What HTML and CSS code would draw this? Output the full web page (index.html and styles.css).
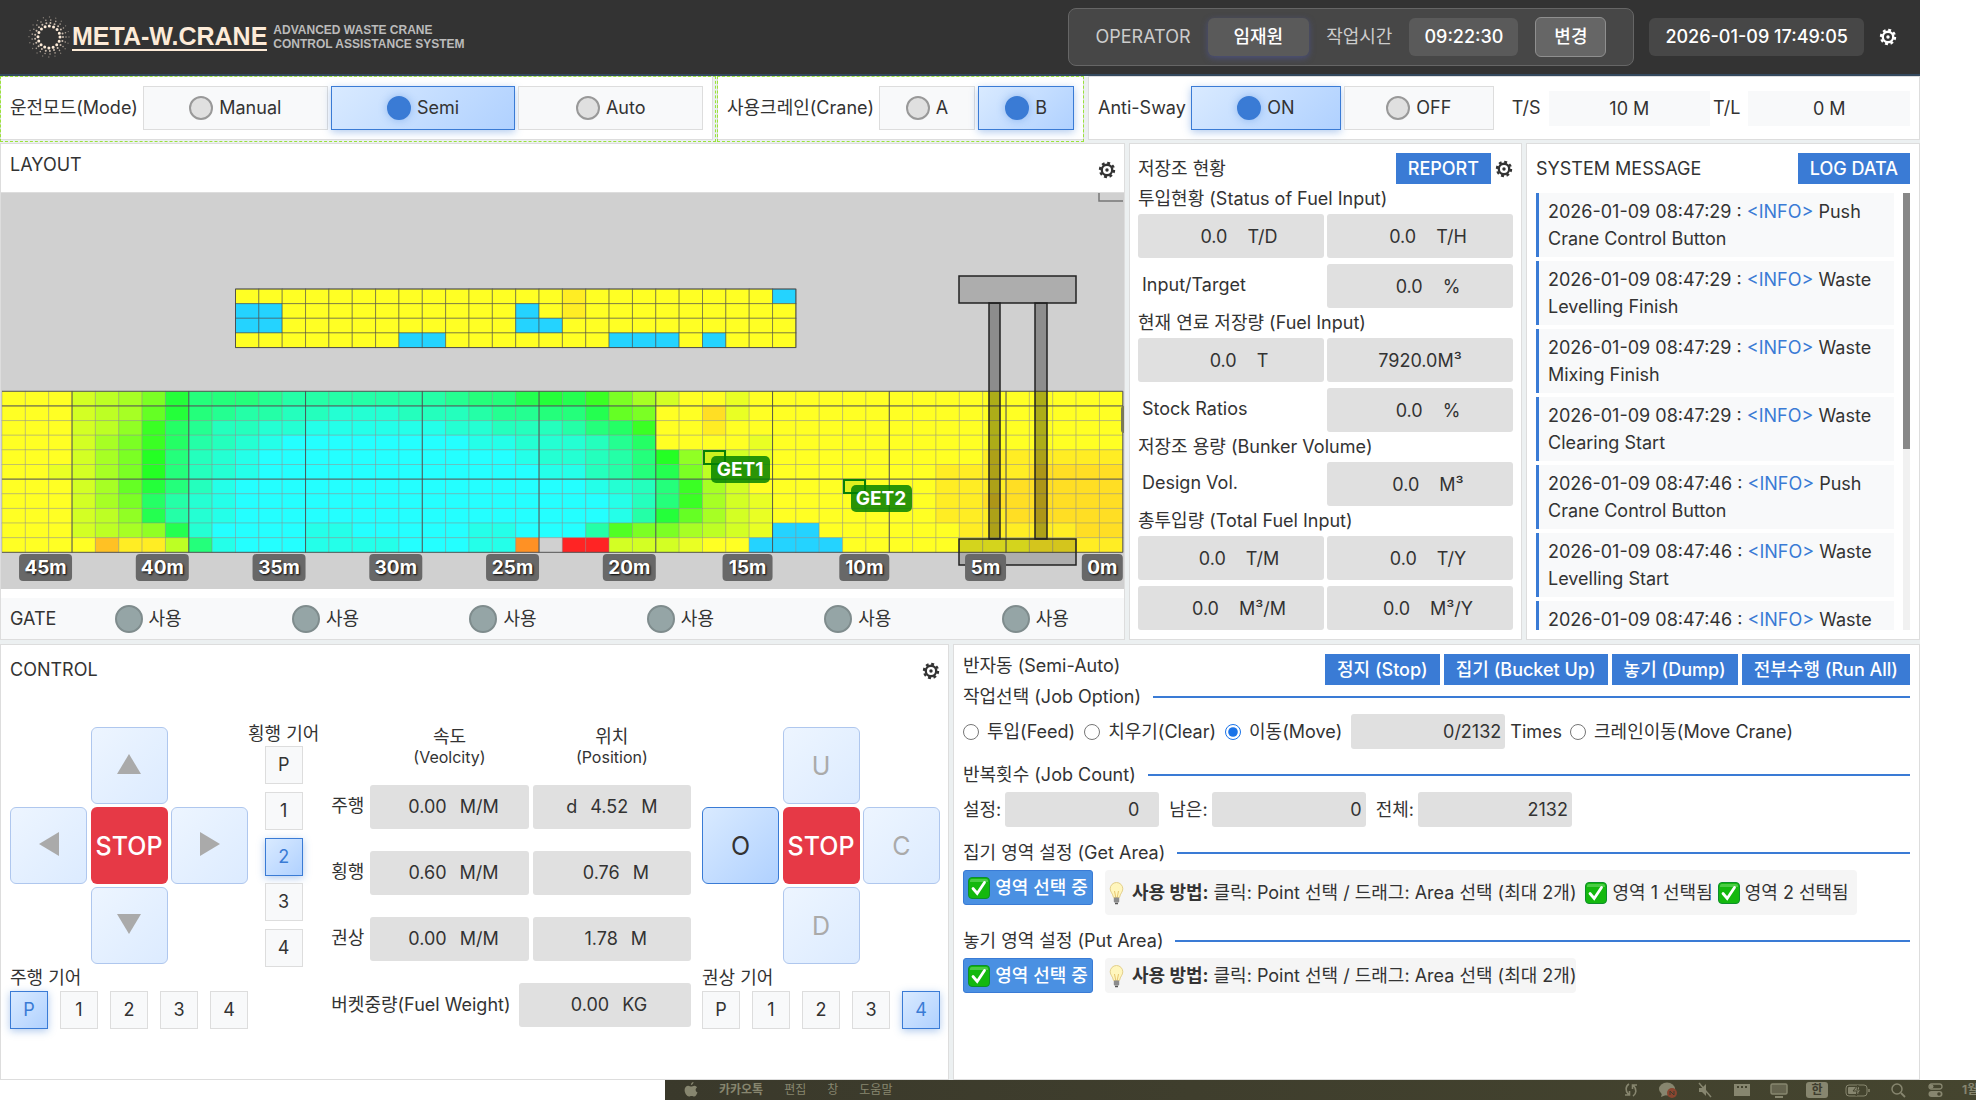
FILE: index.html
```html
<!DOCTYPE html>
<html lang="ko">
<head>
<meta charset="utf-8">
<title>META-W.CRANE</title>
<link rel="stylesheet" href="styles.css">
</head>
<body>
<svg class="defs" aria-hidden="true">
  <symbol id="gear" viewBox="0 0 20 20">
    <circle cx="10" cy="10" r="7.800" fill="none" stroke="currentColor" stroke-width="2.600" stroke-dasharray="3.2 2.926"/>
    <circle cx="10" cy="10" r="5.800" fill="none" stroke="currentColor" stroke-width="2.600"/>
    <circle cx="10" cy="10" r="1.900" fill="currentColor"/>
  </symbol>
  <symbol id="check" viewBox="0 0 22 22">
    <rect x=".5" y=".5" width="21" height="21" rx="3.5" fill="#14b80e" stroke="#0d8f2b"/>
    <path d="M2 3.5Q2 2 3.5 2h15Q20 2 20 3.5V5H2z" fill="#6fd96a" opacity=".6"/>
    <path d="M5 11.5l4.2 5L16.500 5.500" fill="none" stroke="#fff" stroke-width="2.800" stroke-linecap="round"/>
  </symbol>
  <symbol id="bulb" viewBox="0 0 16 24">
    <path d="M8 1.500a6.300 6.300 0 0 0-6.300 6.300c0 3.200 2.600 4.600 3.300 8.700h6c.7-4.100 3.300-5.500 3.300-8.700A6.300 6.300 0 0 0 8 1.500z" fill="#fff6bd" stroke="#e3cf8a"/>
    <path d="M6 10l1.200 6M10 10l-1.200 6" stroke="#e0b95a" stroke-width=".8"/>
    <rect x="5.300" y="16.500" width="5.400" height="5" rx="1" fill="#8c8c8c"/>
    <path d="M6.500 22.500h3" stroke="#555" stroke-width="1.500"/>
  </symbol>
</svg>

<div class="app">
  <header class="topbar">
    <div class="brand">
      <svg class="brand-mark" viewBox="0 0 44 44" fill="none" stroke="#fdebd8" stroke-linecap="round">
        <circle cx="22" cy="22" r="11" stroke-width="3" stroke-dasharray="0 4.320"/>
        <circle cx="22" cy="22" r="14" stroke-width="2" stroke-dasharray="0 4.190" opacity=".75"/>
        <circle cx="22" cy="22" r="17" stroke-width="1.600" stroke-dasharray="0 5.090" opacity=".6"/>
        <circle cx="22" cy="22" r="20" stroke-width="1.400" stroke-dasharray="0 6.280" opacity=".4"/>
      </svg>
      <span class="brand-name">META-W.CRANE</span>
      <span class="brand-sub">ADVANCED WASTE CRANE<br>CONTROL ASSISTANCE SYSTEM</span>
    </div>
    <div class="operator">
      <span class="operator-label">OPERATOR</span>
      <span class="chip chip-name">임재원</span>
      <span class="operator-label">작업시간</span>
      <span class="chip">09:22:30</span>
      <button class="change" type="button">변경</button>
    </div>
    <time class="chip clock">2026-01-09 17:49:05</time>
    <button class="icon-btn light" type="button" aria-label="설정"><svg><use href="#gear"/></svg></button>
  </header>

  <div class="row modes">
    <section class="panel bar guided">
      <span>운전모드(Mode)</span>
      <label class="toggle"><input type="radio" name="mode">Manual</label>
      <label class="toggle"><input type="radio" name="mode" checked>Semi</label>
      <label class="toggle"><input type="radio" name="mode">Auto</label>
    </section>
    <section class="panel bar guided crane-bar">
      <span>사용크레인(Crane)</span>
      <label class="toggle"><input type="radio" name="crane">A</label>
      <label class="toggle"><input type="radio" name="crane" checked>B</label>
    </section>
    <section class="panel bar sway">
      <span>Anti-Sway</span>
      <label class="toggle"><input type="radio" name="sway" checked>ON</label>
      <label class="toggle"><input type="radio" name="sway">OFF</label>
      <span class="sway-key">T/S</span><span class="sway-val">10 M</span>
      <span>T/L</span><span class="sway-val">0 M</span>
    </section>
  </div>

  <div class="row middle">
    <section class="panel layout">
      <div class="layout-head">
        <h2>LAYOUT</h2>
        <button class="icon-btn" type="button" aria-label="설정"><svg><use href="#gear"/></svg></button>
      </div>
      <svg class="map" id="map" viewBox="0 0 1123 396">
        <g id="cells"></g>
        <path d="M1098 0v8h24" fill="none" stroke="#777" stroke-width="1.500"/>
        <g fill="#000" fill-opacity=".17" stroke="#222" stroke-width="1.500">
          <rect x="958" y="83" width="117" height="27"/>
          <rect x="958" y="346" width="117" height="26"/>
          <rect x="988" y="110" width="11" height="236" fill-opacity=".32"/>
          <rect x="1034" y="110" width="12" height="236" fill-opacity=".32"/>
        </g>
        <rect x="1120" y="213" width="8" height="27" rx="3" fill="#7a7a58"/>
        <g class="axis" id="axis"></g>
        <g fill="#008000" fill-opacity=".12" stroke="#087f08" stroke-width="2">
          <rect x="703" y="258" width="21" height="13"/>
          <rect x="843" y="287" width="21" height="13"/>
        </g>
        <g class="pick">
          <rect x="710" y="263" width="59" height="27" rx="5"/><text x="739" y="283">GET1</text>
          <rect x="850" y="292" width="61" height="27" rx="5"/><text x="880" y="312">GET2</text>
        </g>
      </svg>
      <div class="gates">
        <span>GATE</span>
        <ul>
          <li>사용</li><li>사용</li><li>사용</li><li>사용</li><li>사용</li><li>사용</li>
        </ul>
      </div>
    </section>

    <section class="panel storage">
      <div class="head">
        <h2>저장조 현황</h2>
        <button class="action" type="button">REPORT</button>
        <button class="icon-btn" type="button" aria-label="설정"><svg><use href="#gear"/></svg></button>
      </div>
      <h3>투입현황 (Status of Fuel Input)</h3>
      <div class="pairs">
        <div class="value"><span>0.0</span><span>T/D</span></div>
        <div class="value"><span>0.0</span><span>T/H</span></div>
        <span class="key">Input/Target</span>
        <div class="value"><span>0.0</span><span>%</span></div>
      </div>
      <h3>현재 연료 저장량 (Fuel Input)</h3>
      <div class="pairs">
        <div class="value"><span>0.0</span><span>T</span></div>
        <div class="value plain">7920.0M³</div>
        <span class="key">Stock Ratios</span>
        <div class="value"><span>0.0</span><span>%</span></div>
      </div>
      <h3>저장조 용량 (Bunker Volume)</h3>
      <div class="pairs">
        <span class="key">Design Vol.</span>
        <div class="value"><span>0.0</span><span>M³</span></div>
      </div>
      <h3>총투입량 (Total Fuel Input)</h3>
      <div class="pairs">
        <div class="value"><span>0.0</span><span>T/M</span></div>
        <div class="value"><span>0.0</span><span>T/Y</span></div>
        <div class="value"><span>0.0</span><span>M³/M</span></div>
        <div class="value"><span>0.0</span><span>M³/Y</span></div>
      </div>
    </section>

    <section class="panel messages">
      <div class="head">
        <h2>SYSTEM MESSAGE</h2>
        <button class="action" type="button">LOG DATA</button>
      </div>
      <div class="log">
        <ul>
          <li>2026-01-09 08:47:29 : <b>&lt;INFO&gt;</b> Push Crane Control Button</li>
          <li>2026-01-09 08:47:29 : <b>&lt;INFO&gt;</b> Waste Levelling Finish</li>
          <li>2026-01-09 08:47:29 : <b>&lt;INFO&gt;</b> Waste Mixing Finish</li>
          <li>2026-01-09 08:47:29 : <b>&lt;INFO&gt;</b> Waste Clearing Start</li>
          <li>2026-01-09 08:47:46 : <b>&lt;INFO&gt;</b> Push Crane Control Button</li>
          <li>2026-01-09 08:47:46 : <b>&lt;INFO&gt;</b> Waste Levelling Start</li>
          <li>2026-01-09 08:47:46 : <b>&lt;INFO&gt;</b> Waste</li>
        </ul>
        <div class="track"><div class="thumb"></div></div>
      </div>
    </section>
  </div>

  <div class="row bottom">
    <section class="panel control">
      <div class="control-head">
        <h2>CONTROL</h2>
        <button class="icon-btn" type="button" aria-label="설정"><svg><use href="#gear"/></svg></button>
      </div>
      <div class="control-body">
        <div class="pad-col">
          <div class="pad">
            <button class="up" type="button" aria-label="앞"><svg viewBox="0 0 24 24"><path d="M12 2l12 20H0z"/></svg></button>
            <button class="left" type="button" aria-label="왼쪽"><svg viewBox="0 0 24 24"><path d="M2 12L22 0v24z"/></svg></button>
            <button class="stop" type="button">STOP</button>
            <button class="right" type="button" aria-label="오른쪽"><svg viewBox="0 0 24 24"><path d="M22 12L2 0v24z"/></svg></button>
            <button class="down" type="button" aria-label="뒤"><svg viewBox="0 0 24 24"><path d="M12 22L0 2h24z"/></svg></button>
          </div>
          <span class="gear-title">주행 기어</span>
          <div class="gears">
            <button class="on" type="button">P</button><button type="button">1</button><button type="button">2</button><button type="button">3</button><button type="button">4</button>
          </div>
        </div>
        <div class="side-gear">
          <span>횡행 기어</span>
          <div class="gears vertical">
            <button type="button">P</button><button type="button">1</button><button class="on" type="button">2</button><button type="button">3</button><button type="button">4</button>
          </div>
        </div>
        <div class="readouts">
          <table>
            <thead>
              <tr><td></td><th>속도<small>(Veolcity)</small></th><th>위치<small>(Position)</small></th></tr>
            </thead>
            <tbody>
              <tr><th>주행</th><td><div class="value"><span>0.00</span><span>M/M</span></div></td><td><div class="value plain"><span>d</span><span>4.52</span><span>M</span></div></td></tr>
              <tr><th>횡행</th><td><div class="value"><span>0.60</span><span>M/M</span></div></td><td><div class="value"><span>0.76</span><span>M</span></div></td></tr>
              <tr><th>권상</th><td><div class="value"><span>0.00</span><span>M/M</span></div></td><td><div class="value"><span>1.78</span><span>M</span></div></td></tr>
            </tbody>
          </table>
          <div class="weight">
            <span>버켓중량(Fuel Weight)</span>
            <div class="value"><span>0.00</span><span>KG</span></div>
          </div>
        </div>
        <div class="pad-col">
          <div class="pad">
            <button class="up" type="button">U</button>
            <button class="left on" type="button">O</button>
            <button class="stop" type="button">STOP</button>
            <button class="right" type="button">C</button>
            <button class="down" type="button">D</button>
          </div>
          <span class="gear-title">권상 기어</span>
          <div class="gears">
            <button type="button">P</button><button type="button">1</button><button type="button">2</button><button type="button">3</button><button class="on" type="button">4</button>
          </div>
        </div>
      </div>
    </section>

    <section class="panel auto">
      <div class="head">
        <h2>반자동 (Semi-Auto)</h2>
        <button class="action" type="button">정지 (Stop)</button>
        <button class="action" type="button">집기 (Bucket Up)</button>
        <button class="action" type="button">놓기 (Dump)</button>
        <button class="action" type="button">전부수행 (Run All)</button>
      </div>
      <h3>작업선택 (Job Option)</h3>
      <div class="line">
        <label class="pick-job"><input type="radio" name="job">투입(Feed)</label>
        <label class="pick-job"><input type="radio" name="job">치우기(Clear)</label>
        <label class="pick-job"><input type="radio" name="job" checked>이동(Move)</label>
        <label class="times"><input class="num" type="text" value="0/2132">Times</label>
        <label class="pick-job"><input type="radio" name="job">크레인이동(Move Crane)</label>
      </div>
      <h3>반복횟수 (Job Count)</h3>
      <div class="line counts">
        <label>설정:<input class="num spin" type="text" value="0"></label>
        <label>남은:<input class="num" type="text" value="0"></label>
        <label>전체:<input class="num" type="text" value="2132"></label>
      </div>
      <h3>집기 영역 설정 (Get Area)</h3>
      <div class="line area">
        <button class="select" type="button"><svg><use href="#check"/></svg>영역 선택 중</button>
        <p class="hint tall"><svg class="bulb"><use href="#bulb"/></svg><strong>사용 방법:</strong> 클릭: Point 선택 / 드래그: Area 선택 (최대 2개)
          <span class="done first"><svg><use href="#check"/></svg>영역 1 선택됨</span><span class="done"><svg><use href="#check"/></svg>영역 2 선택됨</span></p>
      </div>
      <h3>놓기 영역 설정 (Put Area)</h3>
      <div class="line area">
        <button class="select" type="button"><svg><use href="#check"/></svg>영역 선택 중</button>
        <p class="hint"><svg class="bulb"><use href="#bulb"/></svg><strong>사용 방법:</strong> 클릭: Point 선택 / 드래그: Area 선택 (최대 2개)</p>
      </div>
    </section>
  </div>
</div>

<footer class="menubar">
  <nav>
    <svg viewBox="0 0 14 16" width="14" height="16"><path fill="currentColor" d="M9.500 0c.1 1.500-1.100 3-2.600 3.100C6.800 1.700 8 .2 9.500 0zM13 5.500c-2 1.200-1.700 4 .5 4.900-.6 1.700-1.900 4.100-3.300 4.100-1 0-1.400-.6-2.600-.6s-1.700.6-2.600.6C3 14.500.6 11.200.6 8 .6 5.300 2.300 3.700 4.200 3.700c1.200 0 2.200.8 3 .8s2-.9 3.400-.8c1 .1 1.900.6 2.400 1.800z"/></svg>
    <b>카카오톡</b><span>편집</span><span>창</span><span>도움말</span>
  </nav>
  <div class="status">
    <svg viewBox="0 0 20 16"><path d="M8 2C4.500 4 4 9 7.500 12.500M12 14c3.500-2 4-7 .5-10.500M4 13h4.500V9M16 3h-4.500v4" fill="none" stroke="currentColor" stroke-width="1.600"/></svg>
    <svg viewBox="0 0 20 16"><ellipse cx="9" cy="7" rx="8" ry="6.500" fill="currentColor"/><path d="M4 11l-1 4 5-2z" fill="currentColor"/><circle cx="14" cy="11" r="5" fill="#8a4630"/><path d="M12 13V9l4 4V9" fill="none" stroke="#3d3c2e"/></svg>
    <svg viewBox="0 0 20 16"><path d="M4 6h3l4-4v12l-4-4H4z" fill="currentColor"/><path d="M4 1l12 14" stroke="currentColor" stroke-width="1.500"/></svg>
    <svg viewBox="0 0 20 16"><path fill="currentColor" fill-rule="evenodd" d="M2 2h16v12H2zM5 4v2h2V4zM9 4v2h2V4zM13 4v2h2V4z"/></svg>
    <svg viewBox="0 0 20 16"><rect x="2" y="2" width="16" height="10" rx="1.500" fill="currentColor" fill-opacity=".5" stroke="currentColor" stroke-width="1.500"/><path d="M6 15h8" stroke="currentColor" stroke-width="2"/></svg>
    <span class="ime">한</span>
    <svg class="battery" viewBox="0 0 26 16"><rect x="1" y="3" width="21" height="11" rx="3" fill="none" stroke="currentColor"/><rect x="3" y="5" width="11" height="7" rx="1" fill="currentColor"/><path d="M13 3l-5 6h4l-1 5 5-6h-4z" fill="currentColor" stroke="#45442f"/><path d="M24 7v3" stroke="currentColor" stroke-width="1.500"/></svg>
    <svg viewBox="0 0 20 16"><circle cx="9" cy="7" r="5" fill="none" stroke="currentColor" stroke-width="1.500"/><path d="M13 11l4 4" stroke="currentColor" stroke-width="1.800"/></svg>
    <svg viewBox="0 0 20 16"><rect x="4" y="2" width="13" height="5" rx="2.500" fill="none" stroke="currentColor" stroke-width="1.300"/><rect x="3.500" y="9" width="14" height="6" rx="3" fill="currentColor"/><circle cx="6.500" cy="4.500" r="2" fill="currentColor"/><circle cx="14" cy="12" r="1.800" fill="#45442f"/></svg>
    <span class="date">1월</span>
  </div>
</footer>
<script src="map.js"></script>
</body>
</html>
```
FILE: styles.css
```css
* { box-sizing: border-box; }
body {
  margin: 0;
  background: #fff;
  color: #333;
  font: 18px/24px Inter, "Noto Sans CJK KR", sans-serif;
}
button, input { font: inherit; color: inherit; }
button { padding: 0; border: 0; background: none; white-space: nowrap; }
h2, h3, p, ul { margin: 0; padding: 0; font-size: 18px; font-weight: 400; }
ul { list-style: none; }
.defs { position: absolute; width: 0; height: 0; }

.app { margin-right: 56px; background: #ecf0f1; }
.panel { background: #fff; border: 1px solid #ddd; }
.row { display: grid; gap: 4px; margin-bottom: 4px; }
.icon-btn { width: 18px; height: 18px; }
.icon-btn svg { display: block; width: 18px; height: 18px; }
.light { color: #fff; }

/* header */
.topbar {
  display: flex;
  align-items: center;
  height: 76px;
  padding: 0 23px 0 27px;
  background: #333;
  border-bottom: 2px solid #34495e;
  color: #fff;
}
.brand { display: flex; align-items: center; margin-right: auto; font-family: "Liberation Sans", sans-serif; font-weight: 700; }
.brand-mark { width: 44px; height: 44px; }
.brand-name { margin: 0 6px 0 1px; border-bottom: 2px solid #fdebd8; color: #fdebd8; font-size: 25px; line-height: 26px; }
.brand-sub { color: #bbb; font-size: 12px; line-height: 14px; }
.operator {
  display: flex;
  align-items: center;
  height: 58px;
  margin-right: 15px;
  padding: 0 27px;
  border: 1px solid #666;
  border-radius: 8px;
  background: #474747;
}
.operator-label { margin-right: 17px; color: #ccc; }
.chip { height: 38px; margin-right: 17px; padding: 0 15px; border-radius: 6px; background: #5a5a5a; line-height: 38px; font-weight: 500; }
.chip-name { padding: 0 26px; box-shadow: 0 2px 6px rgba(80, 90, 180, .5); }
.clock { margin-right: 15px; padding: 0 16px; background: #474747; }
.change { width: 71px; height: 40px; border: 1px solid #8f8f8f; border-radius: 6px; background: #666; font-weight: 500; }

/* mode bar */
.modes { grid-template-columns: minmax(0, 713fr) minmax(0, 367fr) minmax(0, 832fr); margin-bottom: 3px; }
.bar { display: flex; align-items: center; gap: 3px; height: 64px; padding: 0 9px; white-space: nowrap; }
.guided { position: relative; }
.guided::after { content: ""; position: absolute; inset: -1px -4px -3px -1px; border: 1px dashed #9be33a; pointer-events: none; }
.crane-bar::after { right: -1px; }
.toggle {
  display: flex;
  flex: 1;
  align-items: center;
  justify-content: center;
  gap: 6px;
  height: 44px;
  border: 1px solid #ddd;
  background: #f8f9fa;
}
.bar > span:first-child { margin-right: 2px; }
.toggle input { appearance: none; width: 24px; height: 24px; margin: 0; border: 2px solid #999; border-radius: 50%; background: #e0e0e0; }
.toggle:has(:checked), .gears .on {
  border-color: #3a7bd5;
  background: linear-gradient(135deg, #d9eaff, #b0d1ff);
  box-shadow: 0 2px 8px rgba(58, 123, 213, .4);
}
.toggle input:checked { border-color: #3a7bd5; background: #3a7bd5; box-shadow: 0 0 8px rgba(58, 123, 213, .4); }
.sway .toggle { flex: 0 1 150px; }
.sway-key { margin-left: 15px; }
.sway-val { flex: 1; height: 35px; margin-left: 5px; background: #f8f9fa; line-height: 35px; text-align: center; }

/* middle row */
.middle { grid-template-columns: minmax(0, 1125fr) minmax(0, 393fr) minmax(0, 394fr); }
.head { display: flex; align-items: center; gap: 4px; height: 31px; }
.head h2 { margin-right: auto; }
.action { height: 31px; padding: 0 12px; background: #3a7bd5; color: #fff; font-weight: 500; }
.value { display: flex; align-items: center; justify-content: center; height: 44px; border-radius: 3px; background: #e0e0e0; }

.layout { display: flex; flex-direction: column; }
.layout-head { display: flex; justify-content: space-between; padding: 9px 8px 13px 9px; }
.layout-head .icon-btn { margin-top: 8px; }
.map { display: block; width: 100%; border-top: 1px solid #ddd; background: #d0d0d0; }
.cell-a { stroke: #888; stroke-opacity: .35; }
.cell-b { stroke: #444; stroke-opacity: .5; }
.axis rect { fill: #686868; }
.axis text, .pick text { fill: #fff; font-size: 19px; font-weight: 700; text-anchor: middle; }
.axis text { text-shadow: 1px 1px 2px #000; }
.pick rect { fill: #008000; fill-opacity: .83; }
.gates { display: flex; align-items: center; height: 41px; margin-top: auto; padding-left: 9px; background: #f8f9fa; }
.gates ul { display: flex; flex: 1; margin-left: 3px; }
.gates li { display: flex; flex: 1; align-items: center; justify-content: center; gap: 6px; }
.gates li::before { content: ""; width: 24px; height: 24px; border: 2px solid #7f8c8d; border-radius: 50%; background: #95a5a6; }

.storage { padding: 9px 8px; }
.storage h3 { height: 30px; line-height: 29px; }
.storage .value { padding-top: 1px; }
.pairs { display: grid; grid-template-columns: 1fr 1fr; gap: 6px 3px; }
.pairs .value { gap: 20px; padding-left: 16px; }
.pairs .plain { padding-left: 0; }
.key { padding-left: 4px; line-height: 42px; }

.messages { padding: 9px; }
.log { display: flex; justify-content: space-between; height: 437px; margin-top: 9px; overflow: hidden; }
.log ul { width: 358px; }
.log li { margin-bottom: 4px; padding: 5px 9px; border-left: 3px solid #3a7bd5; background: #f8f9fa; line-height: 27px; }
.log b { color: #3a7bd5; font-weight: 400; }
.track { width: 7px; background: #f1f1f1; }
.thumb { height: 256px; background: #888; }

/* bottom row */
.bottom { grid-template-columns: minmax(0, 949fr) minmax(0, 967fr); margin: 0; }
.control { padding: 0 8px 0 9px; }
.control-head { display: flex; justify-content: space-between; padding-top: 13px; }
.control-head .icon-btn { margin-top: 4px; }
.control-body { display: flex; margin-top: 45px; }
.pad-col { width: 238px; }
.pad { display: grid; grid-template: repeat(3, 77px) / repeat(3, 77px); gap: 3px; justify-content: space-between; }
.pad button { border: 1px solid #afc7ee; border-radius: 6px; background: linear-gradient(135deg, #edf5ff, #dcebff); color: #aaa; font-size: 25px; }
.pad svg { width: 24px; height: 24px; fill: #aaa; }
.pad .up { grid-area: 1 / 2; }
.pad .left { grid-area: 2 / 1; }
.pad .stop { grid-area: 2 / 2; border: 0; background: #e63946; color: #fff; font-weight: 500; }
.pad .right { grid-area: 2 / 3; }
.pad .down { grid-area: 3 / 2; }
.pad .on { border-color: #3a7bd5; background: linear-gradient(135deg, #d9eaff, #b0d1ff); color: #333; }
.gear-title { display: block; line-height: 27px; }
.gears { display: flex; justify-content: space-between; }
.gears button { width: 38px; height: 38px; border: 1px solid #ddd; background: #f8f9fa; }
.gears .on { color: #3a7bd5; }
.side-gear { display: flex; flex-direction: column; align-items: center; margin-top: -5px; }
.vertical { flex-direction: column; height: 221px; }
.readouts { flex: 1; margin: 0 11px 0 12px; }
table { width: 100%; border-spacing: 0; table-layout: fixed; }
td, th { height: 66px; padding: 0 0 0 4px; font-weight: 400; text-align: center; vertical-align: top; }
tbody th { padding: 0; line-height: 42px; text-align: left; }
thead td, thead th { height: 58px; line-height: 20px; }
thead td { width: 35px; }
small { display: block; font-size: 16px; }
.readouts .value { gap: 13px; padding-left: 8px; }
.readouts .plain { padding: 0; }
.weight { display: flex; align-items: center; justify-content: space-between; }
.weight .value { width: 172px; }

.auto { min-height: 436px; padding: 9px; white-space: nowrap; }
.auto .head h2 { line-height: 20px; margin-bottom: 8px; }
.auto h3 { display: flex; align-items: center; gap: 12px; height: 24px; margin-bottom: 5px; }
.auto h3::after { content: ""; flex: 1; height: 2px; background: #3a7bd5; }
.line { display: flex; align-items: center; margin-bottom: 14px; }
.line label { display: flex; align-items: center; }
.pick-job { margin-right: 9px; }
.pick-job input { width: 16px; height: 16px; margin: 0 8px 0 0; accent-color: #1a73e8; }
.num { width: 154px; height: 35px; padding: 0 4px; border: 0; border-radius: 3px; background: #e0e0e0; text-align: right; }
.times { margin-right: 8px; }
.times input { margin-right: 5px; }
.spin { padding-right: 20px; }
.counts label { margin-right: 10px; }
.counts input { margin-left: 4px; }
.area { align-items: flex-start; gap: 12px; }
.select { display: flex; align-items: center; justify-content: center; gap: 5px; width: 130px; height: 35px; border: 1px solid #3a7bd5; border-radius: 3px; background: #4a90e2; color: #fff; font-weight: 500; }
.select svg, .done svg { width: 22px; height: 22px; }
.hint { display: flex; align-items: center; gap: 5px; height: 35px; padding-left: 3px; border-radius: 4px; background: #f5f5f5; }
.tall { height: 45px; padding-right: 8px; }
.bulb { width: 17px; height: 24px; margin-right: 2px; }
.done { display: flex; align-items: center; gap: 5px; }
.first { margin-left: 4px; }

/* system menu bar */
.menubar {
  display: flex;
  align-items: center;
  justify-content: space-between;
  height: 20px;
  margin-left: 665px;
  padding-left: 19px;
  overflow: hidden;
  background: linear-gradient(90deg, #3a392b, #3f3e2d 40%, #45452f);
  color: #87866f;
  font-size: 12px;
  line-height: 20px;
}
.menubar nav, .status { display: flex; align-items: center; gap: 21px; }
.status { gap: 17px; white-space: nowrap; }
.status svg { width: 20px; height: 16px; }
.status .battery { width: 26px; }
.ime { width: 22px; height: 16px; border-radius: 3px; background: #87866f; color: #3d3c2e; font-weight: 700; line-height: 16px; text-align: center; }
.date { width: 14px; font-weight: 700; }
```
FILE: map.js
```js
// Each character is one cell: a base-36 step of the hue scale; "-" is an empty cell.
const bunker = [
  "aaacdeglooopqqqqqqqpoomlmjgecaabaaaaaaaaaaaaaaaa",
  "aaacdehlopqqrrsssrrrqppoomhgaa8baaaaaaaaaaaaaaaa",
  "aaacdfjnprrssttttttssrrrqonjaa9aaaaaaaaaaaaaaaaa",
  "aaacegjnqrstuuuuuuuuttsssrpnaaaabaaaaaaaaaaaaaaa",
  "aaacegkorstuuuuuuuuuuutssrqokfbcbaaaaaaaaa999999",
  "aabcegkorstuuuuuuuuuuuuttrqomgdcaaaaaaaa99998888",
  "aaacehlortuuuuuuuuuuuuuuutsrojecaaaaaaaa99988888",
  "aaacegnqstuuuuuuuuuuuuuuuutrojecbaaaaaaa99888888",
  "aaacdfmqstuuuuuuuuuuuuuuuutqlhecbaaaaaaa99988888",
  "aaacdefmsuuuuttuuuuuttuuuqiggedcbwwaaaaaa9999988",
  "aaaa799dotuuuttttuuutt5-00cccbaawwwwaaaaaaaa9999"
];
const hopper = [
  "aaaaaaaaaaaaaa9aaaaaaaaw",
  "wwaaaaaaaaaawa9aaaaaaaaa",
  "wwaaaaaaaaaawwaaaaaaaaaa",
  "aaaaaaawwaaaaaaawwwawaaa"
];
// The gold steps sit closer to yellow than the even scale would put them.
const gold = { 7: 43, 8: 51, 9: 55 };
const W = 23.35, H = 14.64, X = 1, NS = "http://www.w3.org/2000/svg";
const cells = document.getElementById("cells");
const axis = document.getElementById("axis");

function add(parent, name, attrs, text) {
  const node = document.createElementNS(NS, name);
  for (const key in attrs) node.setAttribute(key, attrs[key]);
  if (text) node.textContent = text;
  parent.appendChild(node);
}
function plot(rows, firstColumn, top, kind) {
  rows.forEach((row, r) => [...row].forEach((c, i) => add(cells, "rect", {
    x: X + (firstColumn + i) * W, y: top + r * H, width: W, height: H, class: kind,
    fill: c === "-" ? "#d0d0d0" : `hsl(${gold[c] || parseInt(c, 36) * 6} 100% 57%)`
  })));
}
plot(bunker, 0, 198.3, "cell-a");
plot(hopper, 10, 96, "cell-b");

const right = X + 48 * W, bottom = 198.3 + 11 * H;
let lines = "";
for (let c = 3; c <= 48; c += 5) lines += `M${X + c * W} 198.3V${bottom}`;
for (const r of [0, 1, 6, 11]) lines += `M${X} ${198.3 + r * H}H${right}`;
lines += `M${X + 10 * W} 96h${24 * W}v${4 * H}h${-24 * W}z`;
add(cells, "path", { d: lines, fill: "none", stroke: "#444", "stroke-opacity": ".8" });

for (let c = 3, m = 45; c <= 48; c += 5, m -= 5) {
  const w = m >= 20 ? 53 : m > 5 ? 50 : 41, end = X + c * W;
  add(axis, "rect", { x: end - w, y: 361, width: w, height: 27, rx: 4 });
  add(axis, "text", { x: end - w / 2, y: 381 }, m + "m");
}
```
